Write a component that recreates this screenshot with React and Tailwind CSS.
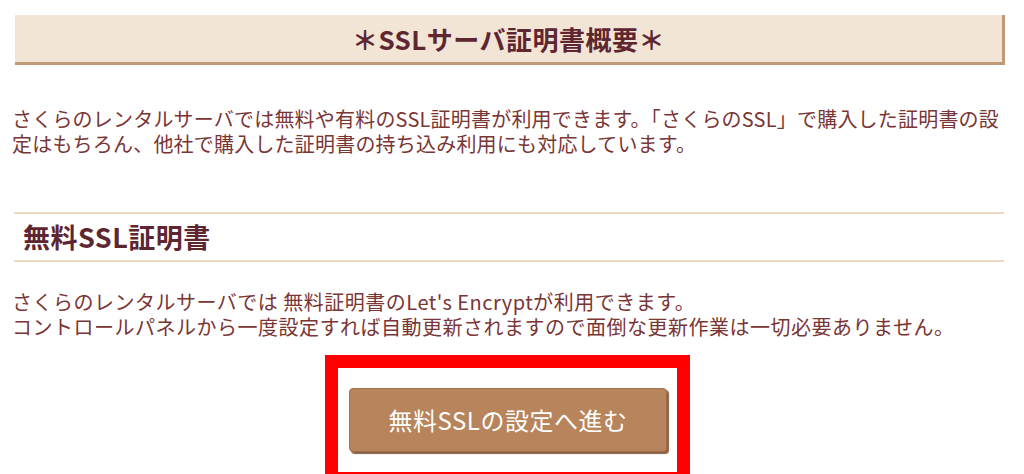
export default function App() {
  return (
    <div className="w-[1024px] h-[474px] overflow-hidden bg-white text-[#7a3535] font-['MS_UI_Gothic','Noto_Sans_CJK_JP',sans-serif]">
      {/* 見出し */}
      <div className="ml-[15px] mt-[15px] w-[990px] h-[50px] bg-[#f2e5d6] border-r-[3px] border-b-[3px] border-[#c09a78] flex items-center justify-center">
        <h2 className="text-[26px] font-bold text-[#5e2630] tracking-[0.5px]">＊SSLサーバ証明書概要＊</h2>
      </div>

      <p className="mt-[41px] pl-[12px] text-[20px] leading-[25px] whitespace-nowrap tracking-[0.2px]">
        さくらのレンタルサーバでは無料や有料のSSL証明書が利用できます。「さくらのSSL」で購入した証明書の設
        <br />
        定はもちろん、他社で購入した証明書の持ち込み利用にも対応しています。
      </p>

      <div className="mt-[56px] ml-[14px] w-[990px] h-[50px] border-y-2 border-[#ecd8c2] flex items-center pl-[9px]">
        <h3 className="text-[27px] font-bold text-[#5e2630] tracking-[0.5px]">無料SSL証明書</h3>
      </div>

      <p className="mt-[27px] pl-[12px] text-[20px] leading-[25px] whitespace-nowrap tracking-[0.5px]">
        さくらのレンタルサーバでは 無料証明書のLet's Encryptが利用できます。
        <br />
        コントロールパネルから一度設定すれば自動更新されますので面倒な更新作業は一切必要ありません。
      </p>

      <div className="mt-[16px] ml-[325px] w-[365px] h-[130px] border-[13px] border-[#ff0000] pt-[20px] pl-[11px]">
        <button className="w-[318px] h-[64px] rounded-[4px] bg-[#b7845b] border border-[#a07050] shadow-[2px_2px_1px_#8a6040] text-white text-[24px] tracking-[0.5px] flex items-center justify-center">
          無料SSLの設定へ進む
        </button>
      </div>
    </div>
  );
}
